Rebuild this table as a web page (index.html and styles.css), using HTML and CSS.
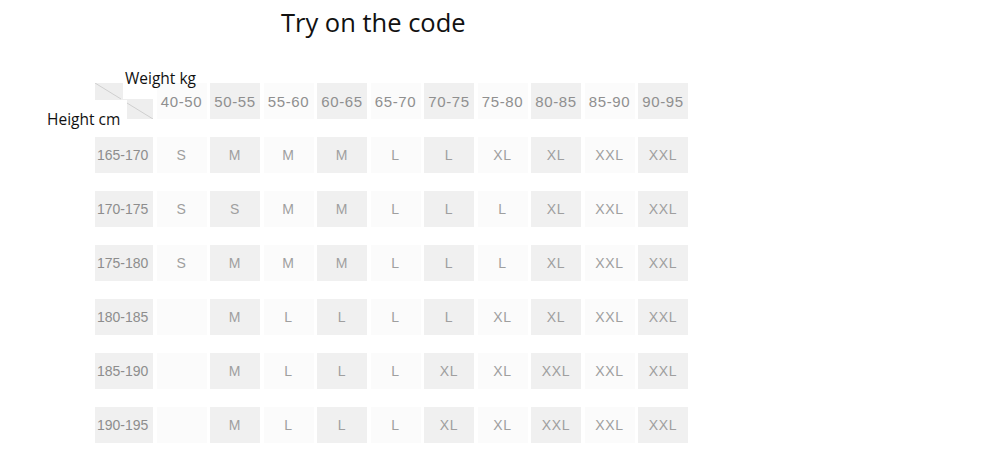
FILE: index.html
```html
<!DOCTYPE html>
<html>
<head>
<meta charset="utf-8">
<link rel="stylesheet" href="styles.css">
</head>
<body>
<h1 class="title">Try on the code</h1>
<div class="chart">
  <span class="axis axis-weight">Weight kg</span>
  <span class="axis axis-height">Height cm</span>
  <div class="grid">
    <div class="cell corner"><svg class="diag" width="58" height="36" viewBox="0 0 58 36"><line x1="0" y1="0" x2="26" y2="16" stroke="#cfcfcf" stroke-width="1"/><line x1="32" y1="20" x2="58" y2="36" stroke="#cfcfcf" stroke-width="1"/></svg></div>
    <div class="cell head">40-50</div><div class="cell head alt">50-55</div><div class="cell head">55-60</div><div class="cell head alt">60-65</div><div class="cell head">65-70</div><div class="cell head alt">70-75</div><div class="cell head">75-80</div><div class="cell head alt">80-85</div><div class="cell head">85-90</div><div class="cell head alt">90-95</div>

    <div class="cell label">165-170</div>
    <div class="cell">S</div><div class="cell alt">M</div><div class="cell">M</div><div class="cell alt">M</div><div class="cell">L</div><div class="cell alt">L</div><div class="cell">XL</div><div class="cell alt">XL</div><div class="cell">XXL</div><div class="cell alt">XXL</div>

    <div class="cell label">170-175</div>
    <div class="cell">S</div><div class="cell alt">S</div><div class="cell">M</div><div class="cell alt">M</div><div class="cell">L</div><div class="cell alt">L</div><div class="cell">L</div><div class="cell alt">XL</div><div class="cell">XXL</div><div class="cell alt">XXL</div>

    <div class="cell label">175-180</div>
    <div class="cell">S</div><div class="cell alt">M</div><div class="cell">M</div><div class="cell alt">M</div><div class="cell">L</div><div class="cell alt">L</div><div class="cell">L</div><div class="cell alt">XL</div><div class="cell">XXL</div><div class="cell alt">XXL</div>

    <div class="cell label">180-185</div>
    <div class="cell"></div><div class="cell alt">M</div><div class="cell">L</div><div class="cell alt">L</div><div class="cell">L</div><div class="cell alt">L</div><div class="cell">XL</div><div class="cell alt">XL</div><div class="cell">XXL</div><div class="cell alt">XXL</div>

    <div class="cell label">185-190</div>
    <div class="cell"></div><div class="cell alt">M</div><div class="cell">L</div><div class="cell alt">L</div><div class="cell">L</div><div class="cell alt">XL</div><div class="cell">XL</div><div class="cell alt">XXL</div><div class="cell">XXL</div><div class="cell alt">XXL</div>

    <div class="cell label">190-195</div>
    <div class="cell"></div><div class="cell alt">M</div><div class="cell">L</div><div class="cell alt">L</div><div class="cell">L</div><div class="cell alt">XL</div><div class="cell">XL</div><div class="cell alt">XXL</div><div class="cell">XXL</div><div class="cell alt">XXL</div>
  </div>
</div>
</body>
</html>
```

FILE: styles.css
```css
html, body {
  margin: 0;
  padding: 0;
  background: #ffffff;
}

.title {
  margin: 0;
  padding: 5px 0 0 281px;
  font-family: "Open Sans", "Liberation Sans", sans-serif;
  font-weight: 400;
  font-size: 25.5px;
  line-height: 34px;
  color: #111111;
}

.chart {
  position: relative;
  margin: 44px 0 0 95px;
  width: 593px;
}

.grid {
  display: grid;
  grid-template-columns: 58px repeat(10, 50px);
  grid-auto-rows: 36px;
  column-gap: 3.5px;
  row-gap: 18px;
}

.cell {
  display: flex;
  align-items: center;
  justify-content: center;
  background: #fbfbfb;
  font-family: "Liberation Sans", Arial, sans-serif;
  font-size: 14px;
  letter-spacing: 0.6px;
  color: #9f9f9f;
}

.cell.alt {
  background: #f0f0f0;
}

.cell.head {
  font-size: 15px;
  letter-spacing: 0.6px;
  color: #8f8f8f;
}

.cell.label {
  background: #f0f0f0;
  color: #8d8d8d;
  font-size: 14px;
  letter-spacing: 0;
  justify-content: flex-start;
  padding-left: 2px;
}

.cell.corner {
  position: relative;
  background:
    linear-gradient(#ffffff, #ffffff) 28px 0 / 30px 16px no-repeat,
    linear-gradient(#ffffff, #ffffff) 0 17px / 32px 19px no-repeat,
    #eeeeee;
}

.diag {
  position: absolute;
  left: 0;
  top: 0;
}

.axis {
  position: absolute;
  z-index: 2;
  font-family: "Open Sans", "Liberation Sans", sans-serif;
  font-size: 15.5px;
  line-height: 20px;
  color: #111111;
  white-space: nowrap;
}

.axis-weight {
  left: 30px;
  top: -15px;
}

.axis-height {
  left: -48px;
  top: 26px;
}
```
